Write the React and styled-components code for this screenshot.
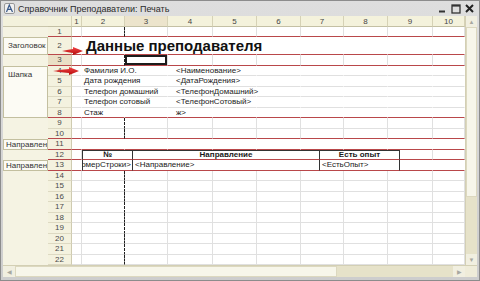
import React from 'react';
import styled, { createGlobalStyle } from 'styled-components';

const GlobalStyle = createGlobalStyle`
  html, body { margin: 0; padding: 0; background: #fff; }
  body { font-family: "Liberation Sans", Arial, sans-serif; }
`;

const COLS = [10, 43, 43, 45, 44, 44, 43, 44, 45, 32];
const GRID = `24px ${COLS.map((w) => w + 'px').join(' ')}`;
const TABLE_GRID = '24px 10px 51px 187px 80px 33px 32px';
const RED = '#b9474a';
const LINE = '#e0e0e0';

const ROWS = [
  { n: 1, h: 10, red: true },
  { n: 2, h: 18, red: true, section: true, title: 'Данные преподавателя', arrow: { left: 14, top: 10, w: 21 } },
  { n: 3, red: true, selected: true },
  { n: 4, section: true, label: 'Фамилия И.О.', value: '<Наименование>', arrow: { left: 5, top: 1.5, w: 26 } },
  { n: 5, section: true, label: 'Дата рождения', value: '<ДатаРождения>' },
  { n: 6, section: true, label: 'Телефон домашний', value: '<ТелефонДомашний>' },
  { n: 7, section: true, label: 'Телефон сотовый', value: '<ТелефонСотовый>' },
  { n: 8, section: true, red: true, label: 'Стаж', value: 'ж>' },
  { n: 9 },
  { n: 10, red: true },
  { n: 11, section: true, red: true },
  { n: 12, red: true, table: 'head' },
  { n: 13, red: true, table: 'body' },
  ...Array.from({ length: 9 }, (_, i) => ({ n: 14 + i })),
];

const GROUPS = [
  { h: 11, header: true },
  { h: 10 },
  { h: 18, text: 'Заголовок' },
  { h: 10.5 },
  { h: 52.5, text: 'Шапка' },
  { h: 21 },
  { h: 10.5, text: 'Направление' },
  { h: 10.5 },
  { h: 10.5, text: 'Направление' },
];

const Window = styled.div`
  width: 480px;
  height: 281px;
  box-sizing: border-box;
  border: 1px solid #8c8c8c;
  background: linear-gradient(#dedede, #cdcdcd);
  padding: 0 2px 3px;
  display: flex;
  flex-direction: column;
  overflow: hidden;
`;

const TitleBar = styled.div`
  height: 15px;
  display: flex;
  align-items: center;
  gap: 3px;
  font-size: 9px;
  color: #2b2b2b;
  padding-left: 1px;
`;

const TitleText = styled.span`
  flex: 1;
  white-space: nowrap;
`;

const Controls = styled.div`
  display: flex;
  align-items: center;
  gap: 4px;
  padding-right: 3px;
`;

const Body = styled.div`
  display: flex;
  height: 249px;
`;

const Sheet = styled.div`
  width: 462px;
  display: flex;
  background: #fff;
`;

const GroupCol = styled.div`
  width: 45px;
  display: flex;
  flex-direction: column;
  background: #f5f3e3;
`;

const GroupSlot = styled.div`
  height: ${(p) => p.$h}px;
  flex: none;
  box-sizing: border-box;
  ${(p) => p.$header && `background: #f3f1dc; border-bottom: 1px solid #c9c5aa;`}
`;

const GroupLabel = styled.div`
  height: ${(p) => p.$h}px;
  flex: none;
  box-sizing: border-box;
  border: 1px solid #c3bf9f;
  background: #fcfbf4;
  font-size: 8px;
  line-height: 9px;
  color: #333;
  padding: ${(p) => (p.$h > 12 ? '3px 2px 0 4px' : '0 0 0 2px')};
  white-space: nowrap;
  overflow: hidden;
`;

const Grid = styled.div`
  width: 417px;
  display: flex;
  flex-direction: column;
`;

const Row = styled.div`
  position: relative;
  display: grid;
  grid-template-columns: ${(p) => p.$cols};
  height: ${(p) => p.$h}px;
  flex: none;
`;

const HeadCell = styled.div`
  box-sizing: border-box;
  background: ${(p) => (p.$active ? '#ece4cc' : '#f4f2dc')};
  border-right: 1px solid #d6d2b6;
  border-bottom: 1px solid #c4c0a4;
  font-size: 8px;
  color: #444;
  display: flex;
  align-items: center;
  justify-content: center;
`;

const RowNum = styled.div`
  box-sizing: border-box;
  background: ${(p) => (p.$active ? '#eadfc6' : '#f4f2df')};
  border-right: 1px solid #cfcbb0;
  border-bottom: 1px solid ${(p) => (p.$red ? RED : '#ddd9c2')};
  font-size: 8px;
  color: #4a4a4a;
  display: flex;
  align-items: center;
  justify-content: center;
`;

const Cell = styled.div`
  box-sizing: border-box;
  min-width: 0;
  border-right: 1px ${(p) => (p.$dashed ? 'dashed #1e1e1e' : `solid ${p.$lines ? LINE : 'transparent'}`)};
  border-bottom: 1px solid ${(p) => (p.$red ? RED : LINE)};
  ${(p) => p.$selected && 'box-shadow: inset 0 0 0 2px #1c1c1c;'}
  display: flex;
  align-items: ${(p) => (p.$bottom ? 'flex-end' : 'center')};
  padding-left: ${(p) => p.$pad || 0}px;
  white-space: nowrap;
  font-size: 8px;
  color: #222;
`;

const Title = styled.span`
  font-size: 15px;
  font-weight: bold;
  line-height: 15px;
  color: #111;
  margin-bottom: 1px;
`;

const TCell = styled.div`
  box-sizing: border-box;
  min-width: 0;
  overflow: hidden;
  white-space: nowrap;
  border-left: ${(p) => (p.$first ? '1px solid #333' : 'none')};
  border-right: 1px solid #333;
  border-top: ${(p) => (p.$head ? '1px solid #333' : 'none')};
  border-bottom: 1px solid ${RED};
  display: flex;
  align-items: center;
  justify-content: ${(p) => p.$align || 'flex-start'};
  padding: ${(p) => (p.$align === 'flex-end' ? '0 1px 0 0' : '0 2px')};
  font-size: 8px;
  font-weight: ${(p) => (p.$head ? 'bold' : 'normal')};
  color: #1a1a1a;
`;

const Arrow = styled.svg`
  position: absolute;
  left: ${(p) => p.$left}px;
  top: ${(p) => p.$top}px;
`;

const VScroll = styled.div`
  width: 12px;
  display: flex;
  flex-direction: column;
  background: #ebe8d2;
  border-left: 1px solid #d3cfb4;
  box-sizing: border-box;
`;

const ScrollBtn = styled.div`
  width: ${(p) => (p.$w ? p.$w + 'px' : 'auto')};
  height: ${(p) => (p.$h ? p.$h + 'px' : 'auto')};
  flex: none;
  display: flex;
  align-items: center;
  justify-content: center;
  background: #f1efe0;
  color: #a8a8a0;
  font-size: 6px;
`;

const Thumb = styled.div`
  flex: none;
  ${(p) => (p.$vertical ? `height: ${p.$size}px;` : `width: ${p.$size}px;`)}
  box-sizing: border-box;
  background: #f7f6ea;
  border: 1px solid #dcd8bf;
`;

const Track = styled.div`
  flex: 1;
  background: #e6e2c9;
`;

const HScroll = styled.div`
  height: 12px;
  display: flex;
  background: #ebe8d2;
  border-top: 1px solid #d3cfb4;
  box-sizing: border-box;
`;

const Corner = styled.div`
  width: 12px;
  background: #efecd9;
`;

const RedArrow = ({ left, top, w }) => (
  <Arrow $left={left} $top={top} width={w} height="8" viewBox={`0 0 ${w} 8`}>
    <defs>
      <linearGradient id={`ag${w}`} x1="0" y1="0" x2="0" y2="1">
        <stop offset="0" stopColor="#f24545" />
        <stop offset="1" stopColor="#b50c0c" />
      </linearGradient>
    </defs>
    <path
      d={`M0 4 Q${w / 3} 2.6 ${w - 10} 2 L${w - 10} 0 L${w} 4 L${w - 10} 8 L${w - 10} 6 Q${w / 3} 5.4 0 4 Z`}
      fill={`url(#ag${w})`}
    />
  </Arrow>
);

const AppIcon = () => (
  <svg width="11" height="11" viewBox="0 0 11 11">
    <rect x="0.5" y="0.5" width="10" height="10" rx="1.5" fill="#f0f0f0" stroke="#9a9a9a" />
    <path d="M2.5 9 L5.3 2 L8.5 9 M3.8 6.4 H7.2" stroke="#3a5a8a" strokeWidth="1.2" fill="none" />
  </svg>
);

const WinControls = () => (
  <Controls>
    <svg width="9" height="9" viewBox="0 0 9 9">
      <path d="M1 7.5 H7" stroke="#333" strokeWidth="2" />
    </svg>
    <svg width="10" height="10" viewBox="0 0 10 10">
      <rect x="1" y="1" width="8" height="8" fill="none" stroke="#333" strokeWidth="1.3" />
      <path d="M1 1.8 H9" stroke="#333" strokeWidth="1.6" />
    </svg>
    <svg width="9" height="9" viewBox="0 0 9 9">
      <path d="M1 1 L8 8 M8 1 L1 8" stroke="#222" strokeWidth="2" />
    </svg>
  </Controls>
);

const DataRow = ({ row }) => {
  const h = row.h || 10.5;
  const lines = !row.section;
  return (
    <Row $cols={GRID} $h={h}>
      <RowNum $red={row.red} $active={row.selected}>{row.n}</RowNum>
      {COLS.map((_, i) => {
        let content = null;
        let pad = 0;
        if (i === 1 && row.title) {
          content = <Title>{row.title}</Title>;
          pad = 4;
        } else if (i === 1 && row.label) {
          content = row.label;
          pad = 2;
        } else if (i === 3 && row.value) {
          content = row.value;
          pad = 8;
        }
        return (
          <Cell
            key={i}
            $lines={lines}
            $dashed={lines && i === 1}
            $red={row.red}
            $selected={row.selected && i === 2}
            $bottom={!!row.title}
            $pad={pad}
          >
            {content}
          </Cell>
        );
      })}
      {row.arrow && <RedArrow {...row.arrow} />}
    </Row>
  );
};

const TableRow = ({ row }) => {
  const head = row.table === 'head';
  return (
    <Row $cols={TABLE_GRID} $h={10.5}>
      <RowNum $red={row.red}>{row.n}</RowNum>
      <Cell $red $lines={head} />
      <TCell $first $head={head} $align={head ? 'center' : 'flex-end'}>
        {head ? '№' : '<НомерСтроки>'}
      </TCell>
      <TCell $head={head} $align={head ? 'center' : 'flex-start'}>
        {head ? 'Направление' : '<Направление>'}
      </TCell>
      <TCell $head={head} $align={head ? 'center' : 'flex-start'}>
        {head ? 'Есть опыт' : '<ЕстьОпыт>'}
      </TCell>
      <Cell $red $lines={head} />
      <Cell $red $lines={head} />
    </Row>
  );
};

export default function App() {
  return (
    <>
      <GlobalStyle />
      <Window>
        <TitleBar>
          <AppIcon />
          <TitleText>Справочник Преподаватели: Печать</TitleText>
          <WinControls />
        </TitleBar>
        <Body>
          <Sheet>
            <GroupCol>
              {GROUPS.map((g, i) =>
                g.text ? (
                  <GroupLabel key={i} $h={g.h}>{g.text}</GroupLabel>
                ) : (
                  <GroupSlot key={i} $h={g.h} $header={g.header} />
                )
              )}
            </GroupCol>
            <Grid>
              <Row $cols={GRID} $h={11}>
                <HeadCell />
                {COLS.map((_, i) => (
                  <HeadCell key={i} $active={i === 2}>{i + 1}</HeadCell>
                ))}
              </Row>
              {ROWS.map((row) =>
                row.table ? <TableRow key={row.n} row={row} /> : <DataRow key={row.n} row={row} />
              )}
            </Grid>
          </Sheet>
          <VScroll>
            <ScrollBtn $h={11}>▲</ScrollBtn>
            <Thumb $vertical $size={170} />
            <Track />
            <ScrollBtn $h={11}>▼</ScrollBtn>
          </VScroll>
        </Body>
        <HScroll>
          <ScrollBtn $w={12}>◀</ScrollBtn>
          <Thumb $size={322} />
          <Track />
          <ScrollBtn $w={12}>▶</ScrollBtn>
          <Corner />
        </HScroll>
      </Window>
    </>
  );
}
